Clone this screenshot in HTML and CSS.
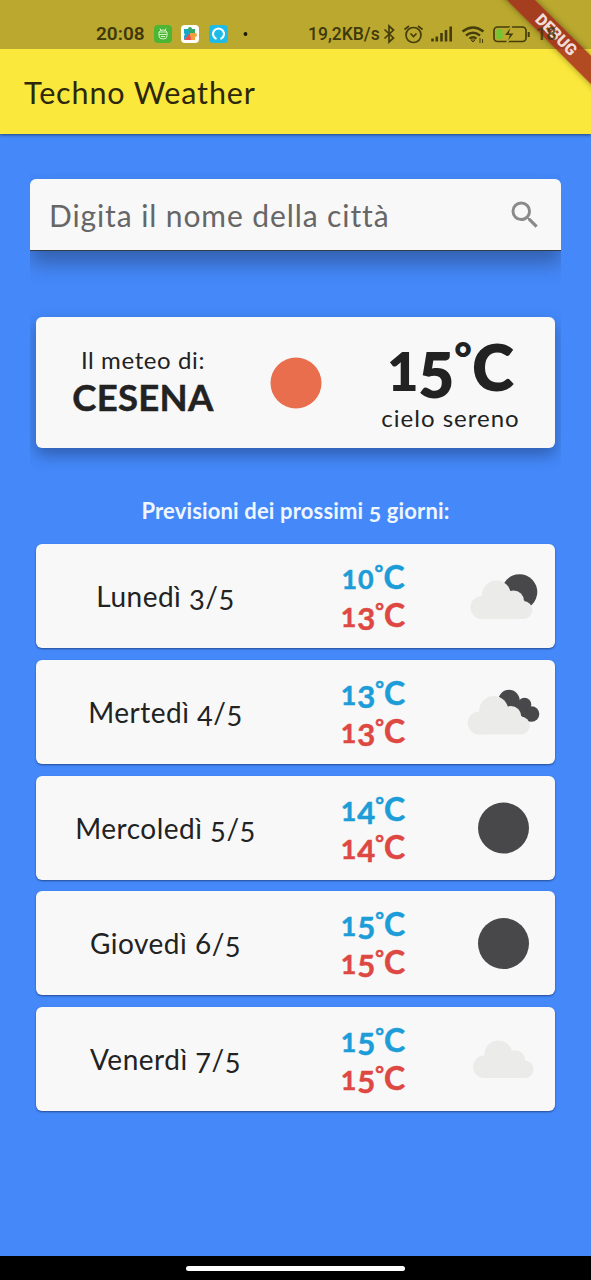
FILE: index.html
```html
<!DOCTYPE html>
<html lang="it">
<head>
<meta charset="utf-8">
<title>Techno Weather</title>
<link rel="stylesheet" href="styles.css">
</head>
<body>
<svg class="defs" width="0" height="0">
  <symbol id="cloud" viewBox="0 0 64 40" overflow="visible">
    <circle cx="11.500" cy="27" r="11.500"/><circle cx="26" cy="14.500" r="14.500"/><circle cx="43" cy="20.500" r="10.500"/><circle cx="53" cy="29.500" r="9"/><path d="M11 20h43v18.500H11z"/>
  </symbol>
</svg>
<div class="screen">
  <header class="top">
    <div class="status">
      <span class="clock">20:08</span>
      <svg class="apps" width="96" height="20" viewBox="0 0 96 20">
        <rect x="0" y="1" width="18" height="18" rx="4" fill="#4cb534"/>
        <path d="M5 8h8M5 10.500h8M6 4.500l1 2M12 4.500l-1 2M5 8v4q0 3 4 3t4-3V8q-1-2-4-2T5 8M7 12.500h4" fill="none" stroke="#d4f3c6" stroke-width="1"/>
        <rect x="27" y="1" width="18" height="18" rx="4" fill="#fff"/>
        <path d="M30 5h4a2 2 0 0 1 4 0h3v5h-5z" fill="#35a866"/>
        <path d="M30 5h4l2 5-6 6v-4a2 2 0 0 0 0-3z" fill="#16a8c9"/>
        <path d="M30 16l6-7 2 7z" fill="#ef4b4b"/>
        <path d="M36 9h5a2 2 0 0 1 0 4v3h-4z" fill="#f3a13b"/>
        <rect x="55" y="1" width="19" height="18" rx="4" fill="#1fbbe8"/>
        <path d="M62.500 15a5.500 5.500 0 1 1 4 0" fill="none" stroke="#fff" stroke-width="2"/>
        <circle cx="91.500" cy="10" r="1.900" fill="#1d1903"/>
      </svg>
      <span class="speed">19,2KB/s</span>
      <svg class="signals" width="148" height="24" viewBox="382 22 148 24" fill="none" stroke="#463d0c" stroke-width="1.700">
        <path d="M384.500 29.500l9 8.500-4.500 4V26l4.500 4-9 8.500"/>
        <circle cx="413.500" cy="35" r="7.500"/><path d="M410.500 33.500l3 3 3-3M404.500 29.500l4.500-3.500M422.500 29.500l-4.500-3.500"/>
        <path d="M432.500 38.500v3M436.800 36.500v5M441.500 33v8.500M446 30v11.500M450.700 26.500v15" stroke-width="2.600"/>
        <path d="M462.500 31.500q10.500-8 21 0M466 35.500q7-5.500 14 0M469.500 38.500q3.500-2.500 7 0" stroke-width="2.400"/>
        <path d="M471 40h4l-2 2zM480 38v5M482.500 39v4" stroke-width="1"/>
        <rect x="494" y="27" width="32" height="14.500" rx="3.500"/>
        <rect x="496.500" y="29.500" width="6" height="9.500" fill="#6cc832" stroke="none"/>
        <path d="M512 25l-8 10.500h5l-2.500 8 8-10.500h-5z" fill="#463d0c" stroke="#baa92e" stroke-width="1.200"/>
        <path d="M528.700 32v5" stroke-width="2"/>
      </svg>
      <span class="level">18</span>
    </div>
    <h1 class="title">Techno Weather</h1>
    <div class="debug">DEBUG</div>
  </header>

  <main class="content">
    <div class="clip clip-search">
      <div class="search">
        <span class="hint">Digita il nome della città</span>
        <svg class="glass" width="36" height="36" viewBox="0 0 24 24"><path fill="#8a8a8a" d="M15.500 14h-.79l-.28-.27A6.471 6.471 0 0 0 16 9.500 6.500 6.500 0 1 0 9.500 16c1.610 0 3.090-.59 4.230-1.570l.27.28v.79l5 4.990L20.490 19l-4.990-5zm-6 0C7.010 14 5 11.990 5 9.500S7.010 5 9.500 5 14 7.010 14 9.500 11.990 14 9.500 14z"/></svg>
      </div>
    </div>

    <div class="clip clip-now">
      <section class="card now">
        <div class="place"><span class="label">Il meteo di:</span><strong class="city">CESENA</strong></div>
        <svg class="sun" width="52" height="52" viewBox="0 0 52 52"><circle cx="26" cy="26" r="25.500" fill="#e96e4d"/></svg>
        <div class="reading"><strong class="degrees"><span class="x">1</span><span class="d">5</span><span class="o">°</span>C</strong><span class="sky">cielo sereno</span></div>
      </section>
    </div>

    <h2 class="heading">Previsioni dei prossimi <span class="d">5</span> giorni:</h2>

    <section class="days">
      <article class="card day">
        <span class="name">Lunedì <span class="d">3</span>/<span class="d">5</span></span>
        <div class="temps"><span class="min"><span class="x">10</span><span class="o">°</span>C</span><span class="max"><span class="x">1</span><span class="d">3</span><span class="o">°</span>C</span></div>
        <svg class="icon" width="80" height="60" viewBox="463 566 80 60"><circle cx="519.500" cy="592" r="17.800" fill="#48484a"/><use href="#cloud" x="470.500" y="580.500" width="64" height="40" fill="#ebebea"/></svg>
      </article>
      <article class="card day">
        <span class="name">Mertedì <span class="d">4</span>/<span class="d">5</span></span>
        <div class="temps"><span class="min"><span class="x">1</span><span class="d">3</span><span class="o">°</span>C</span><span class="max"><span class="x">1</span><span class="d">3</span><span class="o">°</span>C</span></div>
        <svg class="icon" width="80" height="60" viewBox="463 682 80 60"><g fill="#48484a"><circle cx="509" cy="700.500" r="10.700"/><circle cx="524.500" cy="704.500" r="6.800"/><circle cx="531.500" cy="714" r="7.800"/><path d="M508 702h16l6 19.500-16-4z"/></g><use href="#cloud" x="467.800" y="696" width="64" height="40" fill="#ebebea"/></svg>
      </article>
      <article class="card day">
        <span class="name">Mercoledì <span class="d">5</span>/<span class="d">5</span></span>
        <div class="temps"><span class="min"><span class="x">1</span><span class="d">4</span><span class="o">°</span>C</span><span class="max"><span class="x">1</span><span class="d">4</span><span class="o">°</span>C</span></div>
        <svg class="icon" width="80" height="60" viewBox="463 798 80 60"><circle cx="503.500" cy="828" r="25.500" fill="#48484a"/></svg>
      </article>
      <article class="card day">
        <span class="name">Giovedì 6/<span class="d">5</span></span>
        <div class="temps"><span class="min"><span class="x">1</span><span class="d">5</span><span class="o">°</span>C</span><span class="max"><span class="x">1</span><span class="d">5</span><span class="o">°</span>C</span></div>
        <svg class="icon" width="80" height="60" viewBox="463 798 80 60"><circle cx="503.500" cy="828.500" r="25.500" fill="#48484a"/></svg>
      </article>
      <article class="card day">
        <span class="name">Venerdì <span class="d">7</span>/<span class="d">5</span></span>
        <div class="temps"><span class="min"><span class="x">1</span><span class="d">5</span><span class="o">°</span>C</span><span class="max"><span class="x">1</span><span class="d">5</span><span class="o">°</span>C</span></div>
        <svg class="icon" width="80" height="60" viewBox="463 1029 80 60"><use href="#cloud" x="473" y="1040.500" width="62.500" height="39" fill="#ebebea"/></svg>
      </article>
    </section>
  </main>

  <footer class="nav"><span class="pill"></span></footer>
</div>
</body>
</html>
```

FILE: styles.css
```css
* { box-sizing: border-box; }
body { margin: 0; }
.defs { display: none; }
.screen {
  width: 591px; height: 1280px; overflow: hidden;
  display: flex; flex-direction: column;
  background: #4488f9; color: #222;
  font-family: Lato, "Open Sans", sans-serif;
}
.top {
  position: relative; overflow: hidden; flex: none; height: 134px;
  background: #fbe83c; box-shadow: 0 1px 3px rgba(0,0,0,.5);
}
.status {
  height: 49px; padding: 19px 0 0 96px;
  display: flex; align-items: center;
  background: #baa92e; color: #40380b;
  font: 500 18px/24px Roboto, sans-serif; white-space: nowrap;
}
.clock { width: 58px; font-size: 19px; font-weight: 600; }
.apps { flex: none; }
.speed { width: 74px; margin-left: 58px; font-size: 17.500px; }
.signals { flex: none; }
.level { position: relative; z-index: 1; margin-left: 6px; font-weight: 600; opacity: .8; }
.title {
  margin: 0; padding-left: 24px; height: 85px;
  font-size: 30.500px; line-height: 86px; font-weight: 400; letter-spacing: .85px;
  color: #2c260b;
}
.debug {
  position: absolute; left: 456px; top: 25px; width: 200px; height: 20px;
  transform: rotate(45deg);
  background: rgba(160,34,28,.8); color: #f0dcd8;
  box-shadow: 0 0 6px rgba(0,0,0,.4);
  font: 900 16px/20px Roboto, sans-serif; text-align: center;
}
.content { flex: 1; display: flex; flex-direction: column; padding: 0 30px; }
.clip { overflow: hidden; flex: none; }
.clip-search { margin-top: 39px; padding-top: 6px; height: 130px; }
.search {
  height: 72px; padding: 0 18px 0 19px;
  display: flex; align-items: center; justify-content: space-between;
  background: #f8f8f8; border-radius: 6px 6px 0 0; border-bottom: 1px solid #333c4d;
  box-shadow: 0 12px 20px rgba(30,40,70,.42);
}
.hint { font-size: 30px; line-height: 40px; letter-spacing: .9px; color: #666; white-space: nowrap; }
.clip-now { padding: 14px 6px 0; height: 172px; }
.card { background: #f8f8f8; border-radius: 6px; }
.now {
  height: 131px; display: grid; grid-template-columns: 214px 92px 213px;
  align-items: center; justify-items: center;
  box-shadow: 0 7px 15px rgba(20,35,75,.42);
}
.place, .reading { display: flex; flex-direction: column; align-items: center; white-space: nowrap; }
.place { padding-bottom: 3px; }
.label { font-size: 24px; line-height: 32px; letter-spacing: .6px; }
.city { font-size: 36.500px; line-height: 42px; font-weight: 700; letter-spacing: .3px; -webkit-text-stroke: .5px #222; }
.reading { padding-left: 4px; }
.degrees { height: 71px; font-size: 64px; line-height: 72px; font-weight: 800; }
.sky { font-size: 24px; line-height: 32px; letter-spacing: 1px; }
.x { font-size: .84em; line-height: 0; }
.d { display: inline-block; font-size: .97em; line-height: .7; transform: translateY(.12em); }
.o { font-size: .66em; line-height: 0; vertical-align: .42em; }
.heading {
  margin: 20px 0 0; height: 49px; line-height: 31px; font-size: 22px; font-weight: 700;
  letter-spacing: .15px; color: #eef6ff; text-align: center; white-space: nowrap;
}
.days { display: flex; flex-direction: column; gap: 11.750px; padding: 0 6px; }
.day {
  height: 104px; display: grid; grid-template-columns: 259px 156px 104px;
  align-items: center; justify-items: center;
  box-shadow: 0 1px 2px rgba(20,35,75,.6);
}
.name { font-size: 28px; line-height: 36px; letter-spacing: .5px; white-space: nowrap; }
.temps { font-size: 32px; font-weight: 700; line-height: 38px; text-align: center; -webkit-text-stroke: .5px currentColor; }
.temps .x { letter-spacing: 1px; }
.temps .d { transform: translateY(.09em); }
.min, .max { display: block; height: 38px; }
.min { color: #1c9dd8; }
.max { color: #de4842; }
.nav { flex: none; height: 24px; display: flex; justify-content: center; padding-top: 10px; background: #000; }
.pill { width: 219px; height: 5px; border-radius: 3px; background: #fff; }
```
